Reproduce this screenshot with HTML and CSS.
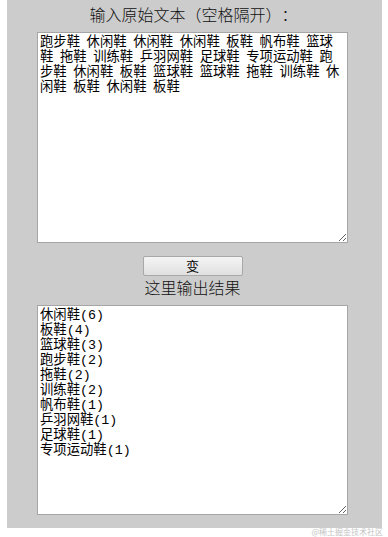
FILE: index.html
```html
<!DOCTYPE html>
<html lang="zh">
<head>
<meta charset="utf-8">
<title>统计</title>
<link rel="stylesheet" href="styles.css">
</head>
<body>
<div class="panel">
  <div class="title">输入原始文本（空格隔开）：</div>
  <textarea class="box box-in">跑步鞋 休闲鞋 休闲鞋 休闲鞋 板鞋 帆布鞋 篮球鞋 拖鞋 训练鞋 乒羽网鞋 足球鞋 专项运动鞋 跑步鞋 休闲鞋 板鞋 篮球鞋 篮球鞋 拖鞋 训练鞋 休闲鞋 板鞋 休闲鞋 板鞋</textarea>
  <div class="actions"><button class="btn">变</button></div>
  <div class="subtitle">这里输出结果</div>
  <textarea class="box box-out">休闲鞋(6)
板鞋(4)
篮球鞋(3)
跑步鞋(2)
拖鞋(2)
训练鞋(2)
帆布鞋(1)
乒羽网鞋(1)
足球鞋(1)
专项运动鞋(1)</textarea>
</div>
<div class="watermark">@稀土掘金技术社区</div>
</body>
</html>
```

FILE: styles.css
```css
html, body {
  margin: 0;
  padding: 0;
  background: #ffffff;
}
body {
  position: relative;
  height: 537px;
  overflow: hidden;
  padding-left: 7px;
  font-family: "Noto Sans CJK SC", "Liberation Sans", sans-serif;
  text-spacing-trim: space-all;
}
.panel {
  width: 375px;
  height: 528px;
  background: #cccccc;
  display: flex;
  flex-direction: column;
  box-sizing: border-box;
}
.title {
  height: 32px;
  line-height: 28px;
  font-size: 16px;
  font-weight: 300;
  color: #111;
  text-align: center;
  padding-right: 2px;
  white-space: nowrap;
}
.box {
  display: block;
  box-sizing: border-box;
  width: 311px;
  margin: 0 0 0 30px;
  padding: 2px 2px;
  border: 1px solid #a6a6a6;
  background: #ffffff;
  color: #000;
  font-family: "Liberation Mono", "Noto Sans CJK SC", monospace;
  font-size: 13.33px;
  line-height: 15px;
  word-spacing: -1.4px;
  resize: both;
  outline: none;
}
.box-in {
  height: 211px;
}
.actions {
  margin-top: 13px;
  display: flex;
  justify-content: center;
  padding-right: 4px;
}
.btn {
  width: 100px;
  height: 20px;
  padding: 0;
  border: 1px solid #a8a8a8;
  border-radius: 2px;
  background: linear-gradient(#f4f4f4, #e0e0e0);
  font-family: "Noto Sans CJK SC", sans-serif;
  font-size: 13px;
  line-height: 18px;
  color: #000;
}
.subtitle {
  height: 23px;
  line-height: 23px;
  font-size: 16px;
  font-weight: 300;
  color: #111;
  text-align: center;
  padding-right: 4px;
}
.box-out {
  margin-top: 6px;
  height: 210px;
}
.watermark {
  position: absolute;
  right: 5px;
  top: 527px;
  font-size: 8px;
  line-height: 10px;
  color: #c4c4c4;
  font-family: "Noto Sans CJK SC", sans-serif;
}
```
